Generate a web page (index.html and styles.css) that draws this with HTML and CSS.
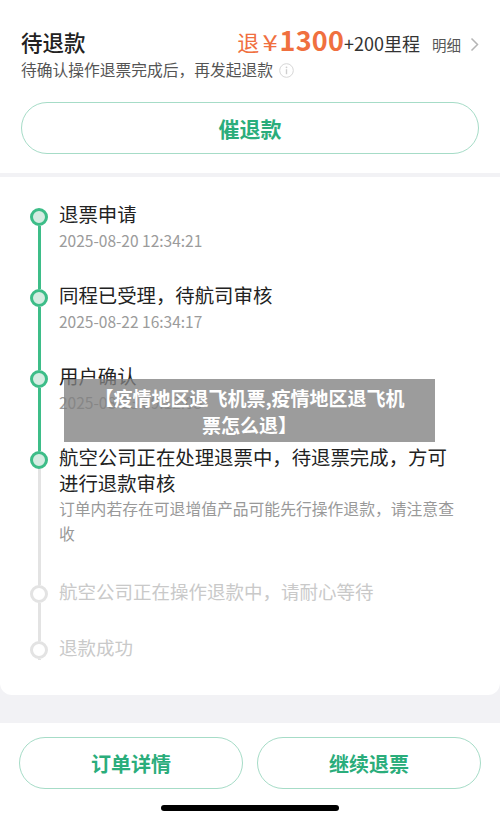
FILE: index.html
```html
<!DOCTYPE html>
<html lang="zh-CN">
<head>
  <meta charset="UTF-8">
  <title>退款进度</title>
  <meta name="viewport" content="width=device-width, initial-scale=1">
  <link rel="stylesheet" href="styles.css">
</head>
<body>
  <div class="page">
    <section class="summary">
      <div class="summary-head">
        <h1>待退款</h1>
        <div class="amount">
          <span class="amount-label">退</span><span class="amount-yen">¥</span><span class="amount-num">1300</span><span class="amount-extra">+200里程</span>
          <a class="detail-link">明细
            <svg width="9" height="15" viewBox="0 0 9 15"><polyline points="1.5,1.5 7.5,7.5 1.5,13.5" fill="none" stroke="#b5b5b5" stroke-width="1.5"/></svg>
          </a>
        </div>
      </div>
      <p class="summary-tip">待确认操作退票完成后，再发起退款
        <svg class="info-icon" width="15" height="15" viewBox="0 0 15 15"><circle cx="7.5" cy="7.5" r="6.8" fill="none" stroke="#d6d6d6" stroke-width="1"/><circle cx="7.5" cy="4.3" r="0.9" fill="#cfcfcf"/><rect x="6.8" y="6.2" width="1.4" height="5" fill="#cfcfcf"/></svg>
      </p>
      <button class="btn-outline btn-wide">催退款</button>
    </section>

    <section class="progress">
      <div class="step done">
        <div class="rail"><i class="seg seg-top"></i><i class="dot"></i><i class="seg seg-bottom"></i></div>
        <div class="step-body">
          <div class="step-title">退票申请</div>
          <div class="step-time">2025-08-20 12:34:21</div>
        </div>
      </div>
      <div class="step done">
        <div class="rail"><i class="seg seg-top"></i><i class="dot"></i><i class="seg seg-bottom"></i></div>
        <div class="step-body">
          <div class="step-title">同程已受理，待航司审核</div>
          <div class="step-time">2025-08-22 16:34:17</div>
        </div>
      </div>
      <div class="step done">
        <div class="rail"><i class="seg seg-top"></i><i class="dot"></i><i class="seg seg-bottom"></i></div>
        <div class="step-body">
          <div class="step-title">用户确认</div>
          <div class="step-time">2025-08-23 09:12:05</div>
        </div>
      </div>
      <div class="step current">
        <div class="rail"><i class="seg seg-top"></i><i class="dot"></i><i class="seg seg-bottom"></i></div>
        <div class="step-body">
          <div class="step-title">航空公司正在处理退票中，待退票完成，方可进行退款审核</div>
          <div class="step-desc">订单内若存在可退增值产品可能先行操作退款，请注意查收</div>
        </div>
      </div>
      <div class="step todo">
        <div class="rail"><i class="seg seg-top"></i><i class="dot"></i><i class="seg seg-bottom"></i></div>
        <div class="step-body">
          <div class="step-title">航空公司正在操作退款中，请耐心等待</div>
        </div>
      </div>
      <div class="step todo last">
        <div class="rail"><i class="seg seg-top"></i><i class="dot"></i><i class="seg seg-bottom"></i></div>
        <div class="step-body">
          <div class="step-title">退款成功</div>
        </div>
      </div>
    </section>

    <footer class="actions">
      <div class="action-row">
        <button class="btn-outline">订单详情</button>
        <button class="btn-outline">继续退票</button>
      </div>
      <div class="home-bar"></div>
    </footer>

    <div class="watermark">【疫情地区退飞机票,疫情地区退飞机<br>票怎么退】</div>
  </div>
</body>
</html>
```

FILE: styles.css
```css
html, body {
  margin: 0;
  padding: 0;
}
body {
  background: #f2f2f5;
  font-family: "Noto Sans CJK SC", "Noto Sans", sans-serif;
  color: #222;
}
.page {
  position: relative;
  width: 500px;
  height: 822px;
  overflow: hidden;
  display: flex;
  flex-direction: column;
}

/* 顶部退款金额 */
.summary {
  background: #fff;
  padding: 20px 21px 19px 21px;
}
.summary-head {
  display: flex;
  justify-content: space-between;
  align-items: baseline;
  height: 28px;
}
h1 {
  margin: 0;
  font-size: 21.5px;
  font-weight: 500;
  line-height: 28px;
  color: #222;
}
.amount {
  display: flex;
  align-items: baseline;
  white-space: nowrap;
}
.amount-label {
  font-size: 22px;
  color: #f0703f;
}
.amount-yen {
  font-size: 22px;
  color: #f0703f;
  margin: 0 3px 0 5px;
  display: inline-block;
  transform: scaleX(1.25);
}
.amount-num {
  font-size: 27px;
  font-weight: 700;
  color: #f0703f;
  letter-spacing: 0.2px;
}
.amount-extra {
  font-size: 18px;
  color: #333;
  margin-right: 12px;
}
.detail-link {
  font-size: 14.5px;
  color: #555;
  display: flex;
  align-items: center;
  gap: 9px;
}
.summary-tip {
  margin: 10px 0 0 0;
  font-size: 15.75px;
  line-height: 24px;
  color: #555;
  display: flex;
  align-items: center;
}
.info-icon {
  margin-left: 6px;
}
.btn-outline {
  height: 52px;
  border: 1px solid #a6dcc7;
  border-radius: 26px;
  background: #fff;
  color: #2aad7b;
  font-family: inherit;
  font-size: 21px;
  font-weight: 700;
  padding: 0;
}
.btn-wide {
  display: block;
  width: 100%;
  margin-top: 20px;
}

/* 进度 */
.progress {
  margin-top: 4px;
  background: #fff;
  border-radius: 0 0 12px 12px;
  padding: 24px 0 35px 0;
}
.step {
  display: flex;
}
.rail {
  width: 18px;
  margin-left: 30px;
  margin-right: 11px;
  display: flex;
  flex-direction: column;
  align-items: center;
}
.seg {
  width: 3px;
  background: #3dbd88;
}
.seg-top {
  height: 7px;
}
.seg-bottom {
  flex: 1;
}
.dot {
  box-sizing: border-box;
  width: 18px;
  height: 18px;
  border-radius: 50%;
  border: 3px solid #3dbd88;
  background: #d5ece2;
}
.step:first-child .seg-top,
.step.last .seg-bottom {
  background: transparent;
}
.step.current .seg-bottom,
.step.todo .seg {
  background: #e3e3e3;
}
.step.todo .dot {
  border-color: #e3e3e3;
  background: #fff;
}
.step-body {
  width: 400px;
  padding-bottom: 29px;
}
.step.last .step-body {
  padding-bottom: 0;
}
.step-title {
  font-size: 19.4px;
  line-height: 26px;
  color: #222;
}
.step-time {
  font-size: 15.5px;
  line-height: 26px;
  color: #9b9b9b;
}
.step-desc {
  font-size: 15.8px;
  line-height: 25px;
  color: #999;
  padding-bottom: 3px;
}
.step.todo .step-title {
  color: #c9c9c9;
  font-size: 18.5px;
}
.step.todo:not(.last) .step-body {
  padding-bottom: 30px;
}

/* 底部操作 */
.actions {
  margin-top: auto;
  background: #fff;
  padding: 14px 19px 11px 19px;
}
.action-row {
  display: flex;
  gap: 14px;
}
.action-row .btn-outline {
  flex: 1;
  font-size: 20px;
}
.home-bar {
  width: 178px;
  height: 6px;
  border-radius: 3px;
  background: #000;
  margin: 16px auto 0 auto;
}

/* 水印 */
.watermark {
  position: absolute;
  left: 64px;
  top: 379px;
  width: 371px;
  height: 63px;
  box-sizing: border-box;
  padding-top: 5px;
  background: rgba(128, 128, 128, 0.78);
  color: #fff;
  font-size: 19px;
  font-weight: 700;
  line-height: 27px;
  text-align: center;
}
```
